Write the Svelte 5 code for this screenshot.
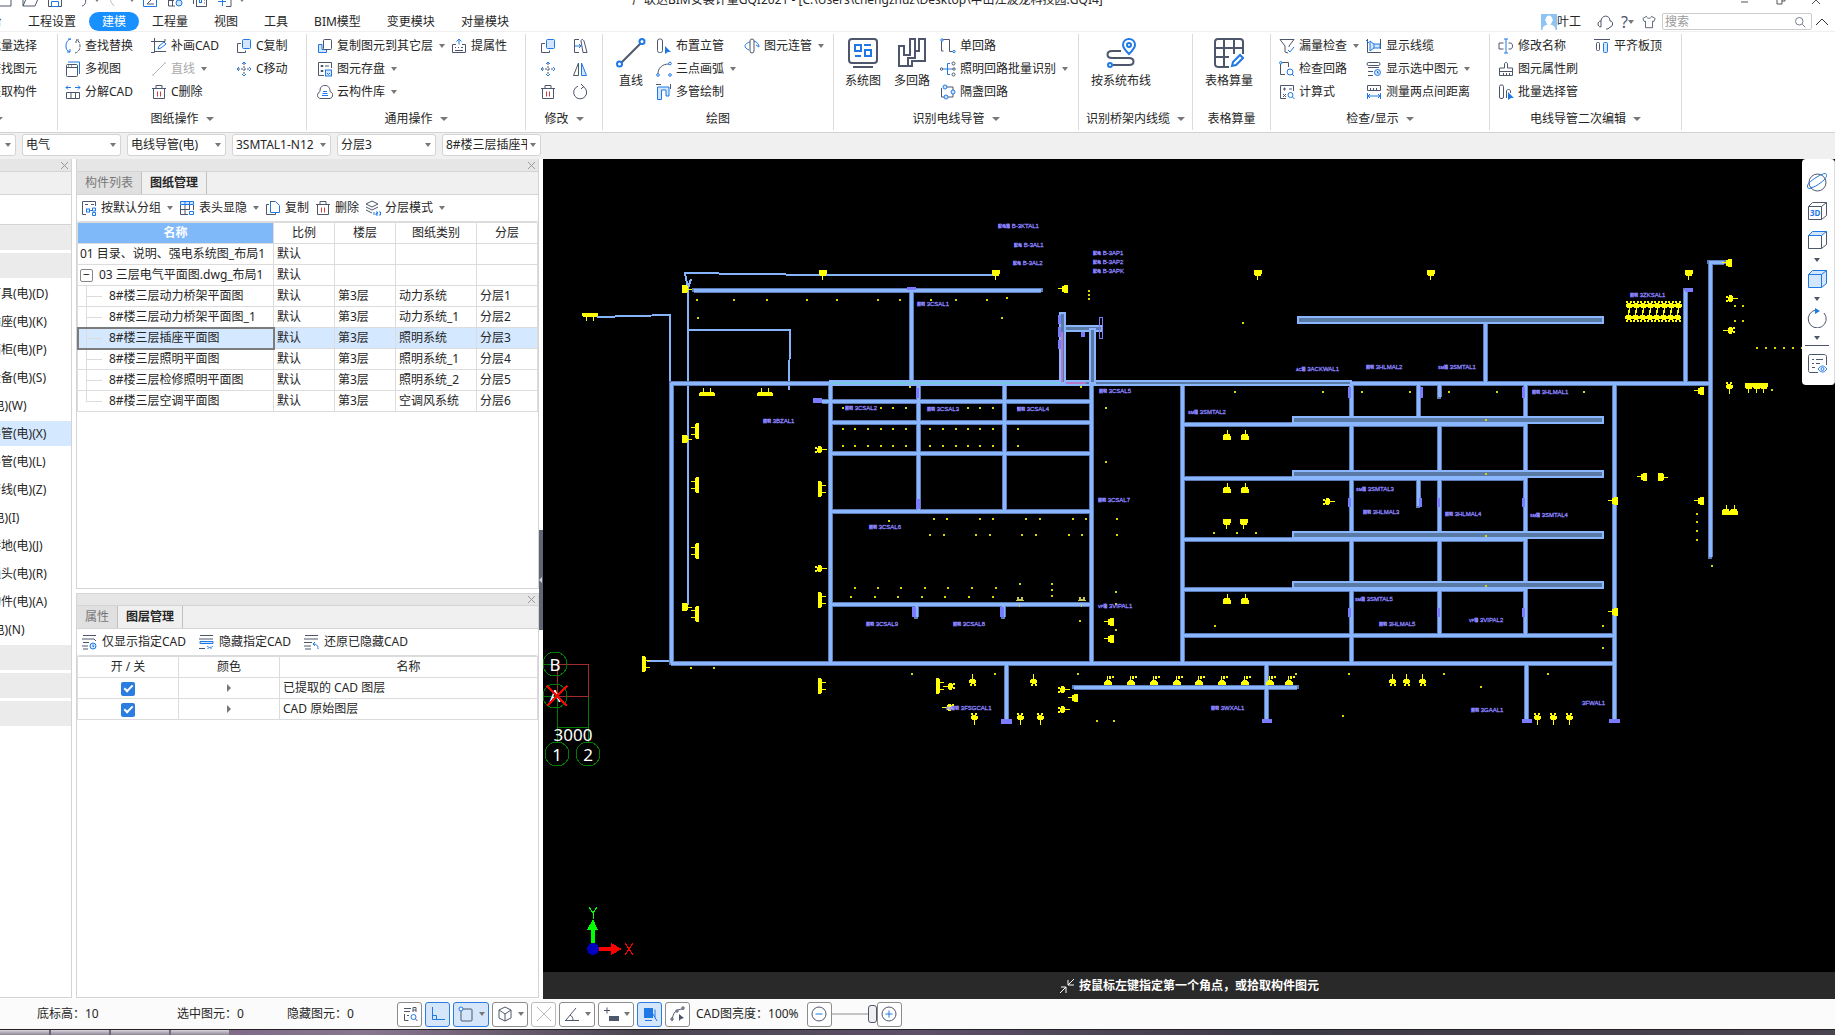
<script lang="ts">
  type Item = { icon: string; label?: string; arrow?: boolean; disabled?: boolean };
  type Col = { w: number; items?: Item[]; big?: Item };
  type Group = { w: number; pad: number; label: string; arrow?: boolean; cols: Col[] };

  // k = dark stroke, b = blue stroke, f = light blue fill, B = solid blue, r = red stroke
  const icons: Record<string, string> = {
    swap: '<path class="b" d="M6 1C2 2 1 5 1 8c0 3 1 5 4 6M2 14h3v-3M6 1H3"/><path class="k" stroke-dasharray="3 1" d="M10 15c4-1 5-4 5-7 0-3-1-5-4-6M14 2h-3v3"/>',
    windows: '<path class="b" d="M3 1h11.500v12"/><rect class="k" x="1.500" y="3.500" width="11" height="12" rx="1"/><path class="k" d="M1.500 6.500h11M3 5h1M6 5h1"/>',
    explode: '<path class="b" d="M1 3.500h5M3 1.500l-2 2 2 2M10 3.500h5M13 1.500l2 2-2 2"/><path class="k" d="M1.500 14.500v-6h13v6zM6 8.500v6M10.500 8.500v6"/>',
    crop: '<path class="k" d="M3.500 0v14.500H0M0 3.500h14V1M3.500 13.500H15"/><path class="b" d="M7 11l1-3 5-4 2 2-5 4z"/>',
    line: '<path class="g" d="M2 14L14 2M1 14h2M13 2h2"/>',
    trash: '<path class="k" d="M1 4.500h14M5 4V1.500h6V4M2.500 5v9.500h11V5"/><path class="r" d="M6.500 7.500v5M9.500 7.500v5"/>',
    copy: '<rect class="b f" x="6.500" y="1.500" width="8" height="9" rx="1"/><path class="k" d="M5 5.500H1.500v9h8v-2"/>',
    copyf: '<path class="b f" d="M5 6.500H1.500v8h8v-3H5z"/><rect class="k" x="6.500" y="1.500" width="8" height="10" rx="1"/>',
    move: '<path class="k" stroke-dasharray="2 1" d="M8 2v12M2 8h12"/><path class="b" d="M6 3l2-2 2 2M6 13l2 2 2-2M3 6L1 8l2 2M13 6l2 2-2 2"/>',
    save2: '<path class="k" d="M7 14.500H1.500v-13h13V7M4 4.500h2v1H4zM8 5h4M4 9.500h2v1H4z"/><rect class="b f" x="8.500" y="9" width="6" height="6"/><path class="b" d="M10 12l1.500 1.500L13 12"/>',
    cloud: '<path class="k" d="M8 1.500c4 0 5 3 5 6 2 1 3 2 2.500 4.500-.5 2-2 2.500-3.500 2.500H4C2 14.500.5 13.500.5 11.500S2 8 3 7.500C3 4 4 1.500 8 1.500z"/><path class="b" d="M5 11.500h6M5.500 9.500h5M6 7.500h4"/>',
    lift: '<path class="b" d="M8 6.500v-5M5.500 3.500L8 1l2.500 2.500"/><path class="k" d="M5 6.500H1.500v8h13v-8H11M4 9.500h1M7 9.500h1M10 9.500h2M4 12.500h8"/>',
    offset: '<path class="k" d="M7 1.500H2.500v13H7M11 14.500L9 3c0-2 2-2 3 0l3 11.500z"/><path class="b" d="M3 8h6M7 6l2 2-2 2"/>',
    mirror: '<path class="k" d="M6.500 2v12.500h-5z"/><path class="b f" d="M9.500 2v12.500h5z"/>',
    rotate: '<path class="k" d="M11 2.500A6.500 6.500 0 1 1 6 2.200"/><path class="k" d="M9 0l2.500 2.500L9 5"/>',
    riser: '<rect class="k" x="1.500" y="1" width="5" height="13.500" rx="2"/><path class="B" d="M9 8l6 6h-3l-3 2z"/>',
    arc: '<path class="k" d="M2 13C2 7 6 3 13 3"/><circle class="b w" cx="2" cy="14" r="1.300"/><circle class="b w" cx="14" cy="2.500" r="1.300"/><circle class="b w" cx="14" cy="14" r="1.300"/>',
    pipes: '<path class="k" d="M0 .5h5M14.500 0v5"/><path class="b f" d="M1.500 3v12.500h4V6h4.500v6h3V3z"/>',
    join: '<path class="b" d="M6 4C2 5 1 7 1 8s1 3 4 4M10 3c3 1 5 3 5 6M12 7l3 2"/><rect class="k w" x="6" y="1" width="4" height="14" rx="2"/>',
    circuit: '<path class="k" d="M1.500 1.500h8v12H13M1.500 1.500V13h2"/><circle class="b w" cx="2" cy="2" r="1.200"/><circle class="b w" cx="14" cy="13.500" r="1.200"/>',
    lights: '<path class="b" d="M1 8h13M10 2.500H7.500v11H10"/><circle class="k w" cx="1.500" cy="8" r="1.200"/><circle class="k w" cx="13.500" cy="2.500" r="1.500"/><circle class="k w" cx="14" cy="8" r="1.200"/><circle class="k w" cx="13.500" cy="13.500" r="1.500"/>',
    alt: '<path class="k" d="M1.500 4v9h3M6 3h7v3M13 10v3H8"/><circle class="b f" cx="5" cy="3" r="2"/><circle class="b f" cx="13" cy="8" r="2"/><circle class="b f" cx="6" cy="13" r="2"/>',
    funnel: '<path class="k" d="M1 1.500h14L10 8v1M1 1.500L6 8v6l3 1"/><path class="b" d="M9 12l2 2 4-5"/>',
    chkcirc: '<path class="k" d="M1.500 1.500h8V6M1.500 1.500v12H6"/><circle class="b w" cx="1.800" cy="1.800" r="1.200"/><circle class="b" cx="11" cy="11" r="3"/><path class="b" d="M13 13l2 2"/>',
    formula: '<path class="k" d="M7 14.500H1.500v-13h13V7M4 5h3M5.500 3.500v3M10 5h3M4 10l3 3M7 10l-3 3"/><circle class="b" cx="11.500" cy="11" r="2.500"/><path class="b" d="M13.500 13l2 2"/>',
    cable: '<path class="k" d="M1.500 1v13.500H15M14.500 1v10"/><path class="b f" d="M4 3v10l4-3V6zM8 6h6v4H8M0 2l3 3"/>',
    showsel: '<rect class="k" x="1" y="1.500" width="13" height="3" rx="1.500"/><path class="k" d="M13 6.500H2M7 10.500H2M7 14.500H2"/><circle class="b f" cx="11.500" cy="11.500" r="3"/><path class="b" d="M11.500 10v2h1.500"/>',
    measure: '<path class="k" d="M1.500 1.500h13v5h-13zM4.500 4v2M7.500 4v2M10.500 4v2"/><path class="b" d="M1.500 9v6M14.500 9v6M2 12h12M4 10l-2 2 2 2M12 10l2 2-2 2"/>',
    rename: '<path class="k" d="M5.500 5H1v6h4.500M10.500 5H13c2 1 2 5 0 6h-2.500"/><path class="b" d="M8 1v14M6 1h4M6 15h4"/>',
    brush: '<path class="k" d="M6.500 7V3c0-2 3-2 3 0v4h5v7.500h-13V7zM1 10.500h14M5.500 12v3M8.500 12v3M11.500 12v3"/>',
    batch: '<rect class="k" x="1.500" y="1" width="4" height="13.500" rx="1.500"/><path class="k" d="M8.500 14V7c0-2 4-2 4 0v2"/><path class="B" d="M10 8l6 6h-3l-3 2z"/>',
    align: '<path class="k" d="M0 1.500h16"/><rect class="k" x="2.500" y="4.500" width="3" height="8" rx="1"/><rect class="b f" x="9.500" y="4.500" width="4" height="10" rx="1"/>',
    group: '<path class="k" d="M5 14.500H1.500v-13h13V6M4 4.500h3M10 4.500h3"/><rect class="b" x="5.500" y="9" width="3" height="3"/><path class="b" d="M8 10.500h3M11.500 8h3v3h-3zM11.500 12.500h3v3h-3z"/>',
    header: '<path class="b f" d="M1.500 1.500h13v3h-13z"/><path class="b" d="M6 1v4M10.500 1v4M10.500 11.500h4v3h-4z"/><path class="k" d="M1.500 5v9.500H9M6 5v10M1 9.500h9M10.500 5v5M14.500 5v5"/>',
    files: '<path class="k" d="M4 4.500H1.500v10h9V13"/><path class="b" d="M5.500 12.500v-11h5l4 4v7z"/><path class="k" d="M5 1.500h4"/>',
    layers: '<path class="k" d="M7 1l6 3-6 3-6-3zM1 7l6 3 6-3M1 10l6 3"/><path class="b" d="M9 12v3M11 12h1.500v1.500H11V15h2M14 12h1.500v3H14"/>',
    lay1: '<path class="k" d="M2 1.500h13M1 5h12l2 2M2 8.500h6M1 12h6M2 15h5"/><circle class="b f" cx="12" cy="12" r="3"/><path class="b" d="M12 10.500v2h1"/>',
    lay2: '<path class="k" d="M2 1.500h13M1 5h14M1 14.500h6"/><path class="b f" d="M2 7.500h13v2H2z"/><path class="b" d="M9 12c2 2 4 2 6 0M10 14v1M13 14v1"/>',
    lay3: '<path class="k" d="M2 1.500h13M1 5h14M1 8.500h8M1 12h7M2 15h6"/><path class="b" d="M15 15c0-4-2-5-5-5M12 8l-2 2 2 2"/>',
    newdoc: '<path class="k" d="M2 1h12v13H2z"/>',
    open: '<path class="k" d="M1 14V2h5l1 2h6v3M1 14L4 7h12l-3 7z"/>',
    disk: '<path class="k" d="M1.500 1h13v13.500h-13z"/><path class="b" d="M4.500 9.500h7v5h-7z"/>',
    undo: '<path class="k" d="M1 5h9c5 0 5 8 0 9"/>',
    redo: '<path class="g" d="M15 5H7c-3 0-4 3-3 5l3 4"/>',
    sum: '<path class="b" d="M1.500 1h13v13.500h-13z"/><path class="k" d="M11 4H5l4 4-4 4h7"/>',
    gridc: '<path class="k" d="M1.500 1v13H8M5.500 1v13M1 8.500h6M14.500 1v6"/><circle class="b f" cx="12" cy="11" r="3"/>',
    boxes: '<path class="k" d="M4.500 14.500V1M1.500 2v10M4 14.500h10.500V2M12 8h1M12 11h1"/><rect class="b" x="7.500" y="7.500" width="2" height="3"/>',
    addbox: '<path class="b" d="M5.500 6v8M1 9.500h8"/><path class="k" d="M9 14.500h5V2"/>',
    find: '<path class="k" d="M2 2.500h7M2 5.500h6M2.500 8v6.500h4M11 6V1.500h3V6M11 4h3M5 9.500h2"/><circle class="b" cx="11.500" cy="11" r="2.500"/><path class="k" d="M13.500 13l2 2"/>',
    ortho: '<path class="b" d="M2.500 1v12.500H15M2.500 9.500h4v4"/>',
    rect: '<rect class="k" x="3" y="3" width="11" height="12" rx="1"/><circle class="b w" cx="3" cy="3" r="2"/>',
    cube: '<path class="k" d="M8 1l6 3v8l-6 3-6-3V4zM2 4l6 4 6-4M8 8v7"/>',
    cross: '<path class="g" d="M1 1l14 14M15 1L1 15"/>',
    angle: '<path class="k" d="M2 14L12 2M1 14.500h14M6 9c2 1 3 3 3 5"/>',
    plusbar: '<path class="k" d="M1 4.500h6M4 1.500v6"/><path class="K" d="M6 10h10v5H6z"/>',
    pick: '<path class="B" d="M2 2h9v10H2z"/><path class="b" d="M13 3.500v8M3 14.500h7M11 8l4 7"/>',
    curve: '<path class="k" d="M2 15C3 6 6 3 14 3"/><path class="k w" d="M1 12h2v2H1zM6 4h2v2H6zM12 1h2v2h-2z"/><path class="K" d="M9 8l5 4-3 1-2 2z"/>',
    minus: '<circle class="k" cx="8" cy="8" r="7"/><path class="b" d="M4.500 8h7"/>',
    plus: '<circle class="k" cx="8" cy="8" r="7"/><path class="b" d="M4.500 8h7M8 4.500v7"/>',
    headset: '<path class="k" d="M4 13c-4 0-4-6 0-6 0-6 9-7 9 0 4 0 3 6 0 6-1 2-3 2-4 2M4 7v6"/>',
    shirt: '<path class="k" d="M5 1.500L1 4l1.500 3.500L4 7v7.500h8V7l1.500.5L15 4l-4-2.500c-1 3-5 3-6 0z"/>',
    search: '<circle class="k" cx="7" cy="7" r="5"/><path class="k" d="M11 11l4 4"/>',
    // 30px icons
    bline: '<path class="k2" d="M5 25L25 5"/><circle class="b2 w" cx="3.500" cy="26" r="2.500"/><circle class="b2 w" cx="26" cy="3.500" r="2.500"/>',
    bsys: '<rect class="k2" x="1" y="1" width="28" height="24" rx="3"/><path class="k2" d="M5 29h20"/><path class="b2" d="M7 7h6v6H7zM16 7h7M7 18h6M17 12h6v6h-6z"/>',
    bmulti: '<path class="k2" d="M2 8h5v9h6V1h5v19h-7v8H2zM18 13h4V1h6v22H15v5h-3"/>',
    broute: '<path class="k2" d="M15 13H6c-6 0-6 7 0 7h17c6 0 6 7 0 7H7"/><circle class="b2 w" cx="4" cy="27" r="2"/><path class="b2 w" d="M23 16c-4-4-6-6-6-9 0-8 12-8 12 0 0 3-2 5-6 9z"/><circle class="b2" cx="23" cy="7" r="2"/>',
    bgrid: '<path class="k2" d="M15 29H5c-3 0-4-1-4-3V4c0-2 1-3 3-3h22c2 0 3 1 3 3v12M1 10h28M1 19h14M10 1v28M20 1v15"/><path class="b2" d="M18 28l1-4 7-7 3 3-7 7z"/>',
    // right toolbar
    globe: '<circle class="k" cx="10.500" cy="10.500" r="8.500"/><path class="b" d="M5 16C-1 18 0 13 2 11 6 7 14 2 18 1.500c3 0 2 5-4 9-4 3-7 5-10 5z"/>',
    c3d: '<path class="k" d="M1.500 5.500h13v13h-13zM1.500 5.500l4-4h14v13l-5 4M14.500 5.500l5-4"/>',
    ctop: '<path class="k" d="M1.500 5.500h13v13h-13zM14.500 18.500l5-4v-13"/><path class="b f" d="M1.500 5.500l4-4h14l-5 4z"/>',
    cfull: '<path class="b f" d="M1.500 5.500l4-4h14v13l-5 4h-13z"/><path class="b" d="M1.500 5.500h13v13M14.500 5.500l5-4"/>',
    orbit: '<path class="k" d="M17 5a9 9 0 1 1-8-3"/><path class="B" d="M8 0l5 3-5 3z"/>',
    props: '<path class="k" d="M11 19.500H3c-1 0-1.500-1-1.500-2v-14c0-1 .5-2 1.500-2h14c1 0 2.500 1 2.500 2V12M5 6.500h2M9 6.500h7M5 10.500h2M9 10.500h4M5 14.500h3"/><path class="b w" d="M11 16c3-4 6-4 9 0-3 4-6 4-9 0z"/><circle class="b" cx="15.500" cy="16" r="1.500"/>'
  };

  const menus = ['工程设置', '建模', '工程量', '视图', '工具', 'BIM模型', '变更模块', '对量模块'];

  const groups: Group[] = [
    { w: 148, pad: 59, label: '选择', arrow: true, cols: [
      { w: 80, items: [{ icon: 'copy', label: '批量选择' }, { icon: 'search', label: '查找图元' }, { icon: 'lift', label: '提取构件' }] }
    ]},
    { w: 249, pad: 7, label: '图纸操作', arrow: true, cols: [
      { w: 86, items: [{ icon: 'swap', label: '查找替换' }, { icon: 'windows', label: '多视图' }, { icon: 'explode', label: '分解CAD' }] },
      { w: 85, items: [{ icon: 'crop', label: '补画CAD' }, { icon: 'line', label: '直线', arrow: true, disabled: true }, { icon: 'trash', label: 'C删除' }] },
      { w: 60, items: [{ icon: 'copy', label: 'C复制' }, { icon: 'move', label: 'C移动' }] }
    ]},
    { w: 219, pad: 10, label: '通用操作', arrow: true, cols: [
      { w: 134, items: [{ icon: 'copyf', label: '复制图元到其它层', arrow: true }, { icon: 'save2', label: '图元存盘', arrow: true }, { icon: 'cloud', label: '云构件库', arrow: true }] },
      { w: 60, items: [{ icon: 'lift', label: '提属性' }] }
    ]},
    { w: 77, pad: 14, label: '修改', arrow: true, cols: [
      { w: 32, items: [{ icon: 'copy' }, { icon: 'move' }, { icon: 'trash' }] },
      { w: 18, items: [{ icon: 'offset' }, { icon: 'mirror' }, { icon: 'rotate' }] }
    ]},
    { w: 231, pad: 12, label: '绘图', cols: [
      { w: 41, big: { icon: 'bline', label: '直线' } },
      { w: 88, items: [{ icon: 'riser', label: '布置立管' }, { icon: 'arc', label: '三点画弧', arrow: true }, { icon: 'pipes', label: '多管绘制' }] },
      { w: 84, items: [{ icon: 'join', label: '图元连管', arrow: true }] }
    ]},
    { w: 245, pad: 10, label: '识别电线导管', arrow: true, cols: [
      { w: 49, big: { icon: 'bsys', label: '系统图' } },
      { w: 47, big: { icon: 'bmulti', label: '多回路' } },
      { w: 136, items: [{ icon: 'circuit', label: '单回路' }, { icon: 'lights', label: '照明回路批量识别', arrow: true }, { icon: 'alt', label: '隔盏回路' }] }
    ]},
    { w: 114, pad: 11, label: '识别桥架内线缆', arrow: true, cols: [{ w: 76, big: { icon: 'broute', label: '按系统布线' } }] },
    { w: 78, pad: 11, label: '表格算量', cols: [{ w: 56, big: { icon: 'bgrid', label: '表格算量' } }] },
    { w: 219, pad: 8, label: '检查/显示', arrow: true, cols: [
      { w: 87, items: [{ icon: 'funnel', label: '漏量检查', arrow: true }, { icon: 'chkcirc', label: '检查回路' }, { icon: 'formula', label: '计算式' }] },
      { w: 118, items: [{ icon: 'cable', label: '显示线缆' }, { icon: 'showsel', label: '显示选中图元', arrow: true }, { icon: 'measure', label: '测量两点间距离' }] }
    ]},
    { w: 192, pad: 8, label: '电线导管二次编辑', arrow: true, cols: [
      { w: 96, items: [{ icon: 'rename', label: '修改名称' }, { icon: 'brush', label: '图元属性刷' }, { icon: 'batch', label: '批量选择管' }] },
      { w: 72, items: [{ icon: 'align', label: '平齐板顶' }] }
    ]}
  ];

  const filters = ['首层', '电气', '电线导管(电)', '3SMTAL1-N12', '分层3', '8#楼三层插座平面图'];

  const kinds = [
    '', '', '照明灯具(电)(D)', '开关插座(电)(K)', '配电箱柜(电)(P)', '电气设备(电)(S)', '桥架(电)(W)',
    '电线导管(电)(X)', '电缆导管(电)(L)', '综合管线(电)(Z)', '母线(电)(I)', '防雷接地(电)(J)',
    '桥架通头(电)(R)', '零星构件(电)(A)', '套管(电)(N)', '', '', ''
  ];

  const drawings = [
    { name: '8#楼三层动力桥架平面图', kind: '动力系统', layer: '分层1' },
    { name: '8#楼三层动力桥架平面图_1', kind: '动力系统_1', layer: '分层2' },
    { name: '8#楼三层插座平面图', kind: '照明系统', layer: '分层3' },
    { name: '8#楼三层照明平面图', kind: '照明系统_1', layer: '分层4' },
    { name: '8#楼三层检修照明平面图', kind: '照明系统_2', layer: '分层5' },
    { name: '8#楼三层空调平面图', kind: '空调风系统', layer: '分层6' }
  ];
  let selected = $state(2);

  // tray runs: x1, y1, x2, y2
  const trays = [
    [694, 290, 1041, 290], [911, 290, 911, 382], [671, 383, 1709, 383], [671, 383, 671, 663],
    [830, 383, 830, 663], [918, 383, 918, 510], [1004, 383, 1004, 510], [1091, 383, 1091, 663],
    [822, 401, 1091, 401], [830, 422, 1091, 422], [830, 453, 1091, 453], [830, 511, 1091, 511],
    [830, 604, 1091, 604], [671, 663, 1614, 663], [916, 604, 916, 617], [1003, 604, 1003, 617],
    [1006, 663, 1006, 720], [1074, 687, 1297, 687], [1485, 320, 1485, 383], [1182, 383, 1182, 662],
    [1182, 424, 1525, 424], [1182, 478, 1525, 478], [1182, 539, 1525, 539], [1182, 589, 1525, 589],
    [1182, 635, 1614, 635], [1351, 383, 1351, 662], [1418, 383, 1418, 422], [1418, 479, 1418, 506],
    [1439, 383, 1439, 397], [1439, 424, 1439, 634], [1525, 383, 1525, 634], [1614, 383, 1614, 721],
    [1266, 663, 1266, 720], [1526, 663, 1526, 720], [1685, 290, 1685, 383], [1710, 262, 1710, 557],
    [1709, 262, 1724, 262]
  ];
  // wide trays drawn as outline: x, y, w, h
  const ducts = [
    [1298, 317, 305, 6], [1293, 417, 310, 6], [1293, 471, 310, 6], [1293, 532, 310, 6], [1293, 582, 310, 6],
    [830, 381, 521, 4], [1062, 326, 40, 5], [1090, 329, 5, 54]
  ];
  const blocks = [
    [907, 287, 9, 3], [813, 398, 9, 5], [912, 607, 4, 10], [1000, 607, 4, 10], [1001, 719, 11, 5],
    [1262, 719, 10, 4], [1522, 719, 10, 4], [1609, 719, 11, 4], [1685, 288, 8, 4], [1348, 387, 3, 11],
    [1420, 387, 3, 11], [1522, 387, 3, 11], [1348, 498, 3, 9], [1419, 498, 3, 9], [1437, 498, 3, 9],
    [1522, 498, 3, 9], [1348, 608, 3, 9], [1437, 608, 3, 9], [1522, 608, 3, 9], [916, 388, 3, 10],
    [916, 499, 4, 10], [1058, 315, 3, 9], [1058, 327, 3, 10], [1058, 340, 3, 9], [1081, 332, 4, 5]
  ];
  const dots: [number, number[]][] = [
    [300, [696, 733, 766, 806, 836, 877, 899, 930, 955, 986]], [298, [1006]], [318, [697, 1001]],
    [291, [1088]], [295, [1088]], [299, [1088]], [387, [909, 1080]],
    [408, [842, 880, 892, 905, 967, 979, 992, 1017, 1105]],
    [429, [842, 854, 867, 880, 892, 905, 929, 942, 955, 967, 979, 992, 1017]],
    [446, [842, 854, 867, 880, 892, 905, 929, 942, 955, 967, 979, 992, 1017]],
    [462, [1105]], [519, [933, 946, 979, 992, 1025, 1039, 1072, 1085, 1116]], [521, [888]],
    [535, [929, 943, 975, 989, 1021, 1035, 1068, 1081, 1116]],
    [588, [854, 877, 900, 924, 947, 971, 995]], [584, [1019, 1051]], [590, [1051]], [596, [1051]],
    [597, [850, 874, 897, 921, 944, 968, 992]], [621, [1079]], [668, [690, 713]],
    [674, [911, 994, 1077, 1295, 1348, 1443, 1547]], [721, [1096, 1113]], [323, [1242]],
    [392, [1234, 1322, 1361, 1409, 1448, 1496, 1583]], [306, [1734, 1742]], [321, [1734, 1742]],
    [348, [1756, 1765, 1774, 1783, 1792, 1801]], [390, [1771]], [533, [1213, 1236, 1255]],
    [592, [1115]], [604, [1115]], [630, [1115]], [626, [1214, 1602]], [648, [1602]],
    [514, [1696]], [522, [1696]], [531, [1696]], [540, [1696]], [566, [1711]], [687, [1480]], [716, [1342]],
    [420, [1485]], [474, [1485]], [536, [1485]], [586, [1485]]
  ];
  // sockets: x, y, direction the stem points
  const sockets: [number, number, string][] = [
    [823, 273, 'd'], [996, 273, 'd'], [1258, 273, 'd'], [1431, 273, 'd'], [1689, 273, 'd'],
    [1227, 437, 'u'], [1245, 437, 'u'], [1227, 490, 'u'], [1245, 490, 'u'], [1227, 601, 'u'], [1245, 601, 'u'],
    [1227, 522, 'd'], [1244, 522, 'd'], [685, 289, 'r'], [685, 439, 'r'], [685, 607, 'r'],
    [1065, 289, 'l'], [1729, 263, 'l'], [1701, 391, 'l'], [1644, 477, 'l'], [1661, 477, 'r'],
    [1701, 501, 'l'], [1615, 501, 'l'], [1615, 612, 'l'], [1111, 622, 'l'], [1111, 639, 'l'],
    [1075, 698, 'l'], [1726, 512, 'u'], [1734, 512, 'u'], [1749, 386, 'd'], [1757, 386, 'd'], [1764, 386, 'd']
  ];
  // the row under the south wall carries a small tag above each socket
  const southRow = [1108, 1131, 1154, 1177, 1199, 1222, 1245, 1270, 1289];
  // sockets with a tag next to the body
  const tagged: [number, number, string][] = [
    [820, 450, 'r'], [820, 569, 'r'], [1731, 299, 'r'], [1730, 330, 'l'], [1328, 502, 'r'],
    [973, 681, 'u'], [1034, 681, 'u'], [950, 686, 'l'], [949, 707, 'l'], [1063, 690, 'r'], [1063, 710, 'r'],
    [974, 718, 'd'], [1020, 718, 'd'], [1040, 718, 'd'], [1393, 681, 'u'], [1407, 681, 'u'], [1423, 681, 'u'],
    [1537, 718, 'd'], [1553, 718, 'd'], [1569, 718, 'd'], [1729, 387, 'd'],
    ...[0, 1, 2, 3, 4, 5, 6, 7].flatMap((i) => [
      [1629 + i * 7, 306, 'd'], [1629 + i * 7, 317, 'u']
    ] as [number, number, string][])
  ];
  const doubles: [number, number, string][] = [
    [707, 394, 'u'], [765, 394, 'u'], [590, 315, 'd'], [697, 431, 'l'], [697, 485, 'l'], [697, 551, 'l'],
    [697, 614, 'l'], [820, 489, 'r'], [820, 600, 'r'], [644, 664, 'r'], [820, 686, 'r'], [938, 686, 'r']
  ];
  const turn: Record<string, number> = { d: 0, l: 90, u: 180, r: 270 };

  const tags: [number, number, string, string][] = [
    [998, 228, '配电箱', 'B-3KTAL1'], [1014, 247, '配电', 'B-3AL1'], [1013, 265, '配电', 'B-3AL2'],
    [1093, 255, '配电', 'B-3AP1'], [1093, 264, '配电', 'B-3AP2'], [1093, 273, '配电', 'B-3APK'],
    [917, 306, '照明', '3CSAL1'], [845, 410, '照明', '3CSAL2'], [927, 411, '照明', '3CSAL3'],
    [1017, 411, '照明', '3CSAL4'], [763, 423, '照明', '3BZAL1'], [1296, 371, 'AC箱', '3ACKWAL1'],
    [1366, 369, '照明', '3HLMAL2'], [1438, 369, 'SM箱', '3SMTAL1'], [1099, 393, '照明', '3CSAL5'],
    [1188, 414, 'SM箱', '3SMTAL2'], [1532, 394, '照明', '3HLMAL1'], [1630, 297, '照明', '3ZKSAL1'],
    [1098, 502, '照明', '3CSAL7'], [1356, 491, 'SM箱', '3SMTAL3'], [1363, 514, '照明', '3HLMAL3'],
    [1445, 516, '照明', '3HLMAL4'], [1530, 517, 'SM箱', '3SMTAL4'], [1355, 601, 'SM箱', '3SMTAL5'],
    [1379, 626, '照明', '3HLMAL5'], [1469, 622, 'VP箱', '3VIPAL2'], [1098, 608, 'VP箱', '3VIPAL1'],
    [1211, 710, '照明', '3WXAL1'], [1471, 712, '照明', '3GAAL1'], [1582, 705, '', '3FWAL1'],
    [869, 529, '照明', '3CSAL6'], [866, 626, '照明', '3CSAL9'], [953, 626, '照明', '3CSAL8'],
    [946, 710, 'FS照明', '3FSGCAL1']
  ];

  const tools: (Item & { on?: boolean })[] = [
    { icon: 'find' }, { icon: 'ortho', on: true }, { icon: 'rect', on: true, arrow: true }, { icon: 'cube', arrow: true },
    { icon: 'cross', disabled: true }, { icon: 'angle', arrow: true }, { icon: 'plusbar', arrow: true },
    { icon: 'pick', on: true }, { icon: 'curve' }
  ];
</script>

{#snippet ico(name: string, size = 16, box = size)}
  <svg class="ico" width={size} height={size} viewBox="0 0 {box} {box}" aria-hidden="true">{@html icons[name]}</svg>
{/snippet}

{#snippet item(it: Item)}
  <button class="item" disabled={it.disabled} aria-label={it.label ?? it.icon}>
    {@render ico(it.icon)}
    {#if it.label}<span>{it.label}</span>{/if}
    {#if it.arrow}<i class="tri"></i>{/if}
  </button>
{/snippet}

{#snippet close()}
  <button aria-label="关闭"><svg width="7" height="7"><path d="M0 0l7 7M7 0L0 7" /></svg></button>
{/snippet}

<div class="app">
  <header class="titlebar">
    <div class="quick">
      {#each ['newdoc', 'open', 'disk', 'undo', 'redo', 'sum', 'gridc', 'boxes', 'addbox'] as q}
        <button aria-label={q}>{@render ico(q)}</button>
        {#if q === 'undo' || q === 'redo' || q === 'addbox'}<i class="tri"></i>{/if}
      {/each}
    </div>
    <span class="title">广联达BIM安装计量GQI2021 - [C:\Users\chengzhuz\Desktop\中山江波龙科技园.GQI4]</span>
    <div class="winctl">
      <button aria-label="最小化"><svg width="10" height="10"><path d="M0 7h7" /></svg></button>
      <button aria-label="还原"><svg width="10" height="10"><path d="M1 3h5v6H1zM4 3V1h5v5H6" /></svg></button>
      <button aria-label="关闭"><svg width="10" height="10"><path d="M1 1l8 8M9 1L1 9" /></svg></button>
    </div>
  </header>

  <nav class="menubar">
    <button class="menu first">工作台</button>
    {#each menus as m}
      <button class="menu" class:active={m === '建模'}>{m}</button>
    {/each}
    <div class="user">
      <svg class="avatar" width="16" height="16" viewBox="0 0 16 16"><rect width="16" height="16" fill="#8ec3f5" /><path d="M4.500 6c0-6 7-6 7 0h.5v1h-1c0 2-1 3-1.500 3.500 3 1 5 2 5 5.500H1.500c0-3.500 2-4.500 5-5.500C6 10 5 9 5 7H4V6z" fill="#fff" /></svg>
      <span>叶工</span>
    </div>
    <button class="mini" aria-label="客服">{@render ico('headset')}</button>
    <button class="mini help">?<i class="tri"></i></button>
    <button class="mini" aria-label="皮肤">{@render ico('shirt', 14, 16)}</button>
    <label class="search"><input type="text" placeholder="搜索" />{@render ico('search', 12, 16)}</label>
    <button class="mini fold" aria-label="折叠"><svg width="14" height="10"><path d="M1 8l6-6 6 6" /></svg></button>
  </nav>

  <section class="ribbon">
    {#each groups as g}
      <div class="group" style="width:{g.w}px">
        <div class="cols" style="padding-left:{g.pad}px">
          {#each g.cols as c}
            <div class="col" style="width:{c.w}px">
              {#if c.big}
                <button class="bigbtn">{@render ico(c.big.icon, 30)}<span>{c.big.label}</span></button>
              {:else}
                {#each c.items ?? [] as it}{@render item(it)}{/each}
              {/if}
            </div>
          {/each}
        </div>
        <div class="glabel">{g.label}{#if g.arrow}<i class="tri big"></i>{/if}</div>
      </div>
    {/each}
  </section>

  <div class="filters">
    {#each filters as f}
      <label class="pick"><select aria-label={f}><option>{f}</option></select><i class="tri"></i></label>
    {/each}
  </div>

  <main>
    <aside class="kinds">
      <div class="dockbar">{@render close()}</div>
      <div class="tabs"></div>
      <div class="kfind"></div>
      <ul>
        {#each kinds as k}
          <li class:head={!k} class:sel={k.endsWith('(X)')}>{k}</li>
        {/each}
      </ul>
    </aside>

    <div class="docks">
      <section class="dock upper">
        <div class="dockbar">{@render close()}</div>
        <div class="tabs"><button class="tab">构件列表</button><button class="tab on">图纸管理</button></div>
        <div class="bar">
          {@render item({ icon: 'group', label: '按默认分组', arrow: true })}
          {@render item({ icon: 'header', label: '表头显隐', arrow: true })}
          {@render item({ icon: 'files', label: '复制' })}
          {@render item({ icon: 'trash', label: '删除' })}
          {@render item({ icon: 'layers', label: '分层模式', arrow: true })}
        </div>
        <div class="body">
          <table class="draws">
            <colgroup><col class="c1" /><col class="c2" /><col class="c3" /><col class="c4" /><col class="c5" /></colgroup>
            <thead>
              <tr><th class="main">名称</th><th>比例</th><th>楼层</th><th>图纸类别</th><th>分层</th></tr>
            </thead>
            <tbody>
              <tr><td class="name">01 目录、说明、强电系统图_布局1</td><td>默认</td><td></td><td></td><td></td></tr>
              <tr><td class="name"><button class="toggle" aria-label="折叠">−</button>03 三层电气平面图.dwg_布局1</td><td>默认</td><td></td><td></td><td></td></tr>
              {#each drawings as d, i}
                <tr class:sel={i === selected} onclick={() => (selected = i)}>
                  <td class="name leaf">{d.name}</td><td>默认</td><td>第3层</td><td>{d.kind}</td><td>{d.layer}</td>
                </tr>
              {/each}
            </tbody>
          </table>
        </div>
      </section>

      <section class="dock lower">
        <div class="dockbar">{@render close()}</div>
        <div class="tabs"><button class="tab">属性</button><button class="tab on">图层管理</button></div>
        <div class="bar wide">
          {@render item({ icon: 'lay1', label: '仅显示指定CAD' })}
          {@render item({ icon: 'lay2', label: '隐藏指定CAD' })}
          {@render item({ icon: 'lay3', label: '还原已隐藏CAD' })}
        </div>
        <div class="body">
          <table class="layers">
            <colgroup><col class="l1" /><col class="l1" /><col /></colgroup>
            <thead><tr><th>开 / 关</th><th>颜色</th><th>名称</th></tr></thead>
            <tbody>
              {#each ['已提取的 CAD 图层', 'CAD 原始图层'] as l}
                <tr>
                  <td class="mid"><input type="checkbox" checked aria-label={l} /></td>
                  <td class="mid"><i class="tri right"></i></td>
                  <td>{l}</td>
                </tr>
              {/each}
            </tbody>
          </table>
        </div>
      </section>
    </div>

    <div class="splitter"><div class="grip"></div></div>

    <div class="canvas">
      <svg class="cad" width="100%" height="100%">
        <g transform="translate(-543 -159)">
          <g class="thin">
            <path d="M688 288L685 273L819 275H996M691 279l-3 9V605M597 317l73-2v68M688 330h102l-1 60M647 661h24" />
          </g>
          {#each trays as [x1, y1, x2, y2]}<path class="tray" d="M{x1} {y1}L{x2} {y2}" />{/each}
          {#each trays as [x1, y1, x2, y2]}<path class="core" d="M{x1} {y1}L{x2} {y2}" />{/each}
          {#each ducts as [x, y, w, h]}<rect class="duct" {x} {y} width={w} height={h} />{/each}
          <rect class="duct" x="1060" y="313" width="5" height="70" />
          <path class="teal" d="M831 383H1060" />
          <path class="pink" d="M1062 332v50M1066 383h20" />
          {#each blocks as [x, y, w, h]}<rect class="block" {x} {y} width={w} height={h} />{/each}
          <rect class="blockline" x="1099" y="317" width="3" height="21" />
          {#each dots as [y, xs]}
            {#each xs as x}<rect class="dot" {x} y={y - 1} width="2" height="2" />{/each}
          {/each}
          {#each sockets as [x, y, d]}
            <path class="sock" transform="translate({x} {y}) rotate({turn[d]})" d="M-4-3h8v3l-1 3h-3v4h-1v-4h-2l-1-3z" />
          {/each}
          {#each southRow as x}
            <path class="sock" transform="translate({x} 682)" d="M-4 3h8v-2l-2-3h-2v-4h-1v4h-1l-2 3zM1-6h2v3H1zM4-6h2v2H4z" />
          {/each}
          {#each tagged as [x, y, d]}
            <path class="sock" transform="translate({x} {y}) rotate({turn[d]})" d="M-3-5h2v2h2v-2h2v2h-1v1h2v2l-1 2h-2v5h-1v-5h-2l-1-2v-2h1v-1h-1z" />
          {/each}
          {#each [1020, 1082] as x}
            <path class="sock dim" transform="translate({x} 600)" d="M-3-3h2v2h2v-2h2v3h1v1h-8v-1h1zM-1 4h1v3h-1z" />
          {/each}
          {#each doubles as [x, y, d]}
            <path class="sock" transform="translate({x} {y}) rotate({turn[d]})" d="M-8-2H8v2l-1 2h-3v4h-1v-4h-6v4h-1v-4h-3l-1-2z" />
          {/each}
          {#each tags as [x, y, pre, code]}
            <text class="tag" {x} {y}><tspan class="pre">{pre}</tspan> {code}</text>
          {/each}
          <g class="axis">
            <path d="M543 664h24M543 696h24M557 696v46M588 696v46M557 727h31" />
            <path class="redline" d="M557 664h31v32h-31z" />
            <circle cx="555" cy="664" r="12" /><circle cx="555" cy="696" r="12" />
            <circle cx="557" cy="754" r="12" /><circle cx="588" cy="754" r="12" />
            <text x="555" y="671">B</text><text x="555" y="702">A</text>
            <text x="573" y="741">3000</text><text x="557" y="761">1</text><text x="588" y="761">2</text>
            <path class="redx" d="M547 686l20 20M567 686l-20 20" />
          </g>
          <g class="ucs">
            <path d="M591 945V930h-4l6-11 5 11h-3v15z" fill="#0f0" />
            <path d="M596 947h15v-4l11 6-11 6v-4h-15z" fill="#f00" />
            <circle cx="593" cy="949" r="6" fill="#0000c0" />
            <path d="M589 907l4 6 4-6M593 913v6" stroke="#0f0" />
            <path d="M625 943l8 12M633 943l-8 12" stroke="#f00" />
          </g>
        </g>
      </svg>
      <div class="hint">
        <svg width="16" height="16"><path d="M15 1l-6 6M9 2v5h6M1 15l6-6M2 9h5v6" /></svg>
        <span>按鼠标左键指定第一个角点，或拾取构件图元</span>
      </div>
      <div class="viewbar">
        <button aria-label="三维观察">{@render ico('globe', 20)}</button>
        <button class="three" aria-label="三维">{@render ico('c3d', 20)}<b>3D</b></button>
        <button aria-label="俯视">{@render ico('ctop', 20)}</button><i class="tri"></i>
        <button aria-label="实体">{@render ico('cfull', 20)}</button><i class="tri"></i>
        <button aria-label="旋转">{@render ico('orbit', 20)}</button><i class="tri"></i>
        <hr />
        <button aria-label="属性">{@render ico('props', 20)}</button>
      </div>
    </div>
  </main>

  <footer class="status">
    <span class="s1">底标高：10</span><span class="s2">选中图元：0</span><span class="s3">隐藏图元：0</span>
    {#each tools as t}
      <button class="tool" class:on={t.on} class:drop={t.arrow} disabled={t.disabled} aria-label={t.icon}>
        {@render ico(t.icon)}{#if t.arrow}<i class="tri"></i>{/if}
      </button>
    {/each}
    <label class="bright" for="bright">CAD图亮度：100%</label>
    <button class="tool join" aria-label="降低">{@render ico('minus')}</button>
    <input id="bright" type="range" min="0" max="100" value="100" />
    <button class="tool" aria-label="提高">{@render ico('plus')}</button>
  </footer>
  <div class="taskbar"><i></i><i></i><i></i><i></i></div>
</div>

<style>
  :global(body) {
    margin: 0;
    overflow: hidden;
    background: #fff;
  }

  .app {
    display: flex;
    flex-direction: column;
    height: 100vh;
    overflow: hidden;
    font: 12px/16px "Noto Sans", "Noto Sans CJK SC", sans-serif;
    color: #262626;
  }

  button, input, select {
    font: inherit;
    color: inherit;
    border: 0;
    padding: 0;
    margin: 0;
    background: none;
  }

  .ico { flex: none; fill: none; }
  .ico :global(.k) { stroke: #4d566b; }
  .ico :global(.b) { stroke: #1e78e6; }
  .ico :global(.g) { stroke: #bbb; }
  .ico :global(.r) { stroke: #d43a3a; }
  .ico :global(.f) { fill: #d3e6fd; }
  .ico :global(.w) { fill: #fff; }
  .ico :global(.B) { fill: #1e78e6; }
  .ico :global(.K) { fill: #4d566b; }
  .ico :global(.k2) { stroke: #4d566b; stroke-width: 2; }
  .ico :global(.b2) { stroke: #1e78e6; stroke-width: 2; }

  .tri {
    flex: none;
    width: 0;
    height: 0;
    border: 3px solid transparent;
    border-top: 4px solid #777;
    border-bottom: 0;
  }
  .tri.big {
    border-width: 4px 4px 0;
    margin-left: 7px;
  }
  .tri.right {
    display: inline-block;
    border: 4px solid transparent;
    border-left: 4px solid #777;
    border-right: 0;
  }

  /* title */
  .titlebar {
    display: flex;
    align-items: center;
    flex: none;
    height: 24px;
    margin-top: -12px;
  }
  .quick {
    display: flex;
    align-items: center;
    width: 635px;
    margin-left: -3px;
  }
  .quick button { height: 16px; margin-right: 9px; }
  .quick .tri { margin: 0 7px 0 -3px; }
  .title { flex: 1; white-space: nowrap; }
  .winctl { display: flex; gap: 25px; padding-right: 14px; }
  .winctl button { height: 10px; }
  .winctl svg { display: block; fill: none; stroke: #555; }

  /* menu */
  .menubar {
    display: flex;
    align-items: center;
    flex: none;
    height: 19px;
    border-bottom: 1px solid #f0f0f0;
  }
  .menu {
    height: 19px;
    padding: 0 13px;
    border-radius: 10px;
    white-space: nowrap;
  }
  .menu.first { margin-left: -47px; }
  .menu.active { background: #1890ff; color: #fff; }
  .user { display: flex; margin-left: auto; margin-right: 16px; }
  .mini { display: flex; align-items: center; margin-right: 8px; font-size: 16px; color: #4d566b; }
  .mini.fold { margin: 0 6px 0 3px; }
  .mini.fold svg { fill: none; stroke: #333; }
  .search {
    display: flex;
    align-items: center;
    box-sizing: border-box;
    width: 150px;
    height: 17px;
    margin-left: -2px;
    padding: 0 5px 0 2px;
    border: 1px solid #ccc;
    border-radius: 2px;
  }
  .search input { flex: 1; min-width: 0; outline: none; }
  .search input::placeholder { color: #999; }

  /* ribbon */
  .ribbon {
    display: flex;
    flex: none;
    height: 100px;
    margin-left: -90px;
    border-bottom: 1px solid #d4d4d4;
  }
  .group {
    flex: none;
    display: flex;
    flex-direction: column;
    box-sizing: border-box;
    margin: 2px 0;
    border-right: 1px solid #dcdcdc;
  }
  .cols { display: flex; flex: none; height: 74px; }
  .col { flex: none; }
  .item {
    display: flex;
    align-items: center;
    gap: 4px;
    height: 23px;
    white-space: nowrap;
  }
  .item .tri { margin-left: 2px; }
  .item:disabled { color: #aaa; }
  .bigbtn {
    display: flex;
    flex-direction: column;
    align-items: center;
    gap: 5px;
    padding: 4px 1px 0;
    white-space: nowrap;
  }
  .glabel {
    display: flex;
    align-items: center;
    justify-content: center;
    height: 22px;
    white-space: nowrap;
  }

  /* filters */
  .filters {
    display: flex;
    flex: none;
    gap: 6px;
    height: 22px;
    padding: 1px 0 3px;
    margin-left: -83px;
    background: #f0f0f0;
  }
  .pick { position: relative; }
  .pick select {
    appearance: none;
    box-sizing: border-box;
    width: 99px;
    height: 22px;
    padding: 0 13px 0 3px;
    border: 1px solid #d4d4d4;
    border-radius: 3px;
    background: #fff;
  }
  .pick .tri { position: absolute; right: 5px; top: 9px; pointer-events: none; }

  main { display: flex; flex: 1; min-height: 0; }

  .kinds {
    flex: none;
    box-sizing: border-box;
    width: 112px;
    margin: 0 4px 1px -40px;
    border: 1px solid #d4d4d4;
    border-top: 0;
  }
  .dockbar {
    display: flex;
    justify-content: flex-end;
    align-items: center;
    flex: none;
    height: 12px;
    padding-right: 3px;
    background: #e6e6e6;
    border-bottom: 1px solid #d4d4d4;
  }
  .dockbar svg { display: block; fill: none; stroke: #999; }
  .tabs {
    display: flex;
    flex: none;
    height: 22px;
    background: #f0f0f0;
    border-bottom: 1px solid #d4d4d4;
  }
  .tab {
    padding: 0 8px;
    color: #777;
    background: #e0e0e0;
    border-right: 1px solid #c0c0c0;
  }
  .tab.on { font-weight: bold; color: #262626; background: #f0f0f0; }
  .kfind { height: 29px; border-bottom: 1px solid #d4d4d4; }
  .kinds ul { list-style: none; margin: 0; padding: 0; }
  .kinds li {
    height: 25px;
    margin-bottom: 3px;
    padding-left: 4px;
    line-height: 25px;
    white-space: nowrap;
  }
  .kinds .head { background: #ebebeb; }
  .kinds .sel { background: #d4e8ff; }

  .docks { display: flex; flex-direction: column; flex: none; width: 463px; padding-bottom: 1px; }
  .dock { display: flex; flex-direction: column; box-sizing: border-box; border: 1px solid #d4d4d4; }
  .upper { flex: 431 0 0; margin-bottom: 4px; border-top: 0; }
  .lower { flex: 404 0 0; }
  .lower .dockbar { height: 11px; }
  .bar {
    display: flex;
    align-items: center;
    flex: none;
    gap: 6px;
    height: 26px;
    padding: 0 4px;
    border-bottom: 1px solid #dcdcdc;
    border-radius: 3px;
  }
  .bar.wide { gap: 12px; }
  .wide .item { gap: 5px; }
  .body { flex: 1; min-height: 0; }

  table { table-layout: fixed; border-collapse: collapse; }
  th, td {
    box-sizing: border-box;
    height: 21px;
    padding: 0 0 0 3px;
    border: 1px solid #dcdcdc;
    font-weight: normal;
    text-align: left;
    white-space: nowrap;
    overflow: hidden;
  }
  th { text-align: center; padding: 0; }
  .draws { width: 460px; }
  .c1 { width: 196px; }
  .c2, .c3, .c5 { width: 61px; }
  .c4 { width: 81px; }
  th.main { background: #80b9fa; color: #fff; font-weight: bold; }
  .name { padding-left: 2px; }
  .leaf {
    padding-left: 31px;
    background: linear-gradient(#dcdcdc, #dcdcdc) 8px 0 / 1px 100% no-repeat,
      linear-gradient(#dcdcdc, #dcdcdc) 8px 10px / 16px 1px no-repeat;
  }
  tr:last-child .leaf { background-size: 1px 10px, 16px 1px; }
  .draws .sel td { background-color: #d4e8ff; }
  .draws .sel .leaf { outline: 2px solid #7c7c7c; outline-offset: -1px; }
  .toggle {
    width: 13px;
    height: 13px;
    margin-right: 6px;
    border: 1px solid #888;
    border-radius: 2px;
    line-height: 10px;
    vertical-align: 0;
  }
  .layers { width: 100%; }
  .l1 { width: 101px; }
  .mid { text-align: center; padding: 0; }
  input[type="checkbox"] {
    appearance: none;
    display: inline-block;
    width: 14px;
    height: 14px;
    border-radius: 2px;
    background: #2b7de0;
    vertical-align: middle;
  }
  input[type="checkbox"]:checked::before {
    content: '';
    display: block;
    width: 3px;
    height: 7px;
    margin: 1px 0 0 5px;
    border: solid #fff;
    border-width: 0 2px 2px 0;
    transform: rotate(45deg);
  }

  .splitter { display: flex; flex: none; width: 4px; padding-top: 371px; }
  .grip { display: flex; align-items: center; width: 4px; height: 100px; background: #5f6772; }
  .grip::after {
    content: '';
    border: 3px solid transparent;
    border-right: 3px solid #d0d4da;
    border-left: 0;
  }

  /* drawing */
  .canvas { position: relative; flex: 1; min-width: 0; background: #000; overflow: hidden; }
  .cad { display: block; shape-rendering: crispEdges; }
  .thin { fill: none; stroke: #86b4fa; stroke-width: 2; }
  .tray { stroke: #5c7db8; stroke-width: 5; stroke-linecap: round; }
  .core { stroke: #8ab6ff; stroke-width: 3; }
  .teal { stroke: #78c8e0; stroke-width: 2; }
  .duct { fill: #587aa5; stroke: #8ab6ff; stroke-width: 2; }
  .pink { stroke: #b878c8; stroke-width: 2; }
  .block { fill: #7b7bff; }
  .blockline { fill: none; stroke: #7b7bff; }
  .dot { fill: #d8d800; }
  .sock { fill: #ff0; }
  .sock.dim { fill: #c8c850; }
  .tag {
    font-family: "Liberation Sans Narrow", "Liberation Sans", "Noto Sans CJK SC", sans-serif;
    font-size: 6px;
    fill: #8c84ff;
    stroke: #8c84ff;
    stroke-width: 0.3;
  }
  .pre { font-size: 4px; }
  .axis { fill: none; stroke: #007a00; }
  .axis text { fill: #fff; stroke: none; font-size: 17px; text-anchor: middle; }
  .redline { stroke: #a02c2c; }
  .redx { stroke: #f00; stroke-width: 2; }
  .ucs path[stroke] { fill: none; }
  .hint {
    position: absolute;
    left: 0;
    right: 0;
    bottom: 0;
    display: flex;
    align-items: center;
    justify-content: center;
    gap: 4px;
    height: 27px;
    background: #292929;
    color: #fff;
    font-weight: bold;
  }
  .hint svg { fill: none; stroke: #fff; }
  .viewbar {
    position: absolute;
    top: 0;
    right: 0;
    display: flex;
    flex-direction: column;
    align-items: center;
    width: 33px;
    height: 226px;
    padding: 13px 2px 0 0;
    box-sizing: border-box;
    background: #fff;
    border-right: 1px solid #ddd;
    border-radius: 4px;
  }
  .viewbar button { position: relative; height: 20px; margin-bottom: 9px; }
  .viewbar button:has(+ .tri) { margin-bottom: 8px; }
  .viewbar .tri { margin-bottom: 7px; border-top-color: #4d566b; }
  .viewbar hr { width: 24px; margin: -2px 0 7px; border: 0; border-top: 1px solid #4d566b; }
  .three b { position: absolute; left: 3px; top: 7px; font-size: 8px; line-height: 10px; color: #1e78e6; }

  /* status */
  .status {
    display: flex;
    align-items: center;
    flex: none;
    gap: 3px;
    height: 30px;
    padding-left: 37px;
    background: #fbfbfb;
    white-space: nowrap;
  }
  .s1 { width: 137px; }
  .s2 { width: 107px; }
  .s3 { width: 107px; }
  .tool {
    display: flex;
    align-items: center;
    justify-content: center;
    gap: 5px;
    box-sizing: border-box;
    width: 25px;
    height: 25px;
    border: 1px solid #8c8c8c;
    border-radius: 3px;
    background: #fff;
  }
  .tool.drop { width: 36px; }
  .tool.on { border-color: #2b7de0; background: #d6e6fa; }
  .tool:disabled { border-color: #bbb; }
  .bright { margin: 0 5px 0 3px; }
  .join, input[type="range"] { margin-right: -3px; }
  input[type="range"] {
    appearance: none;
    width: 45px;
    height: 20px;
    background: linear-gradient(#c4c4c4, #c4c4c4) 0 9px / 100% 2px no-repeat;
  }
  input[type="range"]::-webkit-slider-thumb {
    appearance: none;
    box-sizing: border-box;
    width: 9px;
    height: 18px;
    border: 1px solid #4d566b;
    border-radius: 3px;
    background: #f0f0f0;
  }

  .taskbar {
    display: flex;
    gap: 2px;
    flex: none;
    height: 5px;
    border-top: 1px solid #222;
    background: linear-gradient(90deg, #6f5a7c, #8a7590 20%, #4a4450 35%, #5d5068 50%, #3c3844 70%, #4a4450);
  }
  .taskbar i { width: 58px; background: linear-gradient(#d8d4dc, #8d8594); }
  .taskbar i:first-child { width: 49px; }
</style>
